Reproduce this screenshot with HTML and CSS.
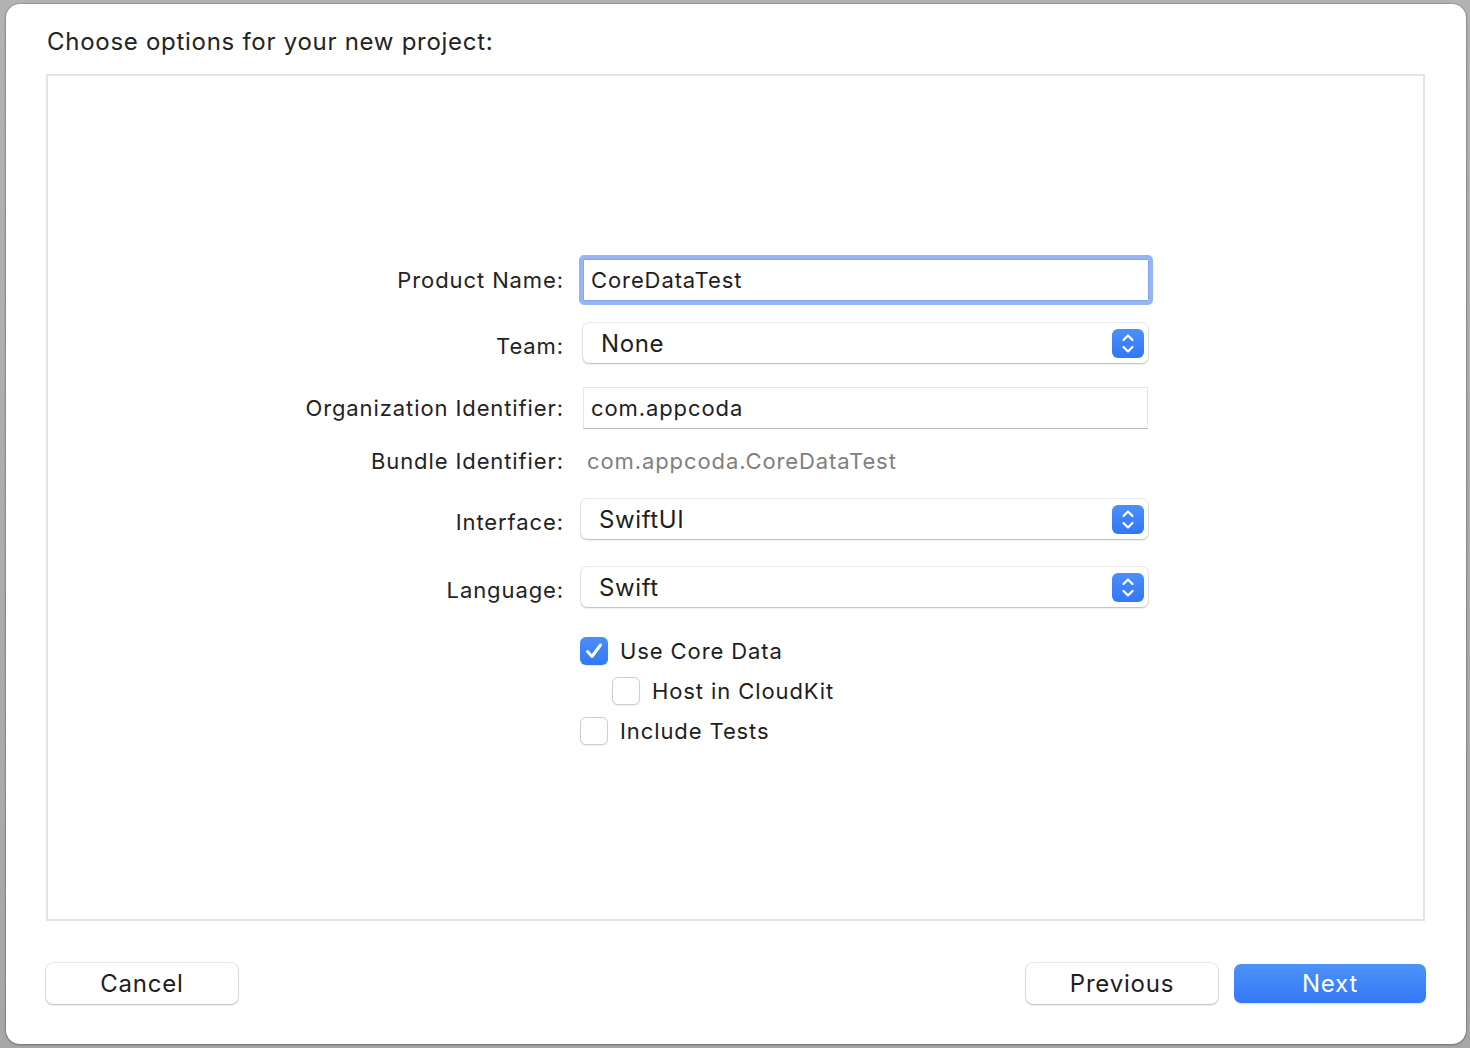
FILE: index.html
```html
<!DOCTYPE html>
<html lang="en">
<head>
<meta charset="utf-8">
<title>Choose options for your new project</title>
<link rel="stylesheet" href="styles.css">
</head>
<body>
<div class="window">
  <h1 class="title">Choose options for your new project:</h1>
  <div class="panel">
    <div class="form">
      <div class="row r1">
        <div class="label">Product Name:</div>
        <div class="field focused">CoreDataTest</div>
      </div>
      <div class="row r2">
        <div class="label low">Team:</div>
        <div class="popup team">
          <span class="popup-text">None</span>
          <span class="stepper"><svg width="32" height="29" viewBox="0 0 32 29"><path d="M11.5 11 L16 6.5 L20.5 11 M11.5 18 L16 22.5 L20.5 18" fill="none" stroke="#fff" stroke-width="2.2" stroke-linecap="round" stroke-linejoin="round"/></svg></span>
        </div>
      </div>
      <div class="row r3">
        <div class="label">Organization Identifier:</div>
        <div class="field plain">com.appcoda</div>
      </div>
      <div class="row r4">
        <div class="label">Bundle Identifier:</div>
        <div class="static">com.appcoda.CoreDataTest</div>
      </div>
      <div class="row r5">
        <div class="label low">Interface:</div>
        <div class="popup">
          <span class="popup-text">SwiftUI</span>
          <span class="stepper"><svg width="32" height="29" viewBox="0 0 32 29"><path d="M11.5 11 L16 6.5 L20.5 11 M11.5 18 L16 22.5 L20.5 18" fill="none" stroke="#fff" stroke-width="2.2" stroke-linecap="round" stroke-linejoin="round"/></svg></span>
        </div>
      </div>
      <div class="row r6">
        <div class="label low">Language:</div>
        <div class="popup">
          <span class="popup-text">Swift</span>
          <span class="stepper"><svg width="32" height="29" viewBox="0 0 32 29"><path d="M11.5 11 L16 6.5 L20.5 11 M11.5 18 L16 22.5 L20.5 18" fill="none" stroke="#fff" stroke-width="2.2" stroke-linecap="round" stroke-linejoin="round"/></svg></span>
        </div>
      </div>
      <div class="row check-row c1">
        <div class="label"></div>
        <div class="check">
          <span class="box checked"><svg width="28" height="28" viewBox="0 0 28 28"><path d="M7.5 14.5 L12 19.5 L20.5 8" fill="none" stroke="#fff" stroke-width="3" stroke-linecap="round" stroke-linejoin="round"/></svg></span>
          <span class="check-text">Use Core Data</span>
        </div>
      </div>
      <div class="row check-row c2">
        <div class="label"></div>
        <div class="check indent">
          <span class="box"></span>
          <span class="check-text">Host in CloudKit</span>
        </div>
      </div>
      <div class="row check-row c3">
        <div class="label"></div>
        <div class="check">
          <span class="box"></span>
          <span class="check-text">Include Tests</span>
        </div>
      </div>
    </div>
  </div>
  <div class="footer">
    <button class="btn">Cancel</button>
    <div class="spacer"></div>
    <button class="btn">Previous</button>
    <button class="btn primary">Next</button>
  </div>
</div>
</body>
</html>
```

FILE: styles.css
```css
html, body {
  margin: 0;
  padding: 0;
}
body {
  background: linear-gradient(#b3b3b3, #a7a7a7);
  width: 1470px;
  height: 1048px;
  overflow: hidden;
  font-family: Inter, "Noto Sans", "Liberation Sans", sans-serif;
  color: #232323;
  -webkit-font-smoothing: antialiased;
}
.window {
  box-sizing: border-box;
  margin: 4px 0 0 6px;
  width: 1460px;
  height: 1040px;
  background: #ffffff;
  border-radius: 14px;
  box-shadow: 0 0 0 1px rgba(0,0,0,0.12), 0 1px 3px rgba(0,0,0,0.25);
  display: flex;
  flex-direction: column;
  padding: 0 40px;
}
.title {
  margin: 24px 0 0 1px;
  font-size: 24px;
  line-height: 28px;
  font-weight: 400;
  color: #232323;
  letter-spacing: 0.72px;
}
.panel {
  box-sizing: border-box;
  margin-top: 18px;
  width: 1379px;
  height: 847px;
  border: 2px solid #e4e4e4;
  padding-top: 179px;
}
.form {
  display: flex;
  flex-direction: column;
}
.row {
  display: flex;
  align-items: center;
}
.label {
  box-sizing: border-box;
  width: 516px;
  flex: none;
  text-align: right;
  font-size: 22px;
  line-height: 26px;
  letter-spacing: 0.9px;
  color: #232323;
  margin-right: 15px;
}
.label.low {
  padding-top: 6px;
}
.r1 { height: 50px; }
.r2 { height: 40px; margin-top: 18px; }
.r3 { height: 42px; margin-top: 24px; }
.r4 { height: 30px; margin-top: 17px; }
.r5 { height: 40px; margin-top: 23px; }
.r6 { height: 40px; margin-top: 28px; }
.c1 { height: 28px; margin-top: 30px; }
.c2 { height: 28px; margin-top: 12px; }
.c3 { height: 28px; margin-top: 12px; }

.field {
  box-sizing: border-box;
  font-size: 22px;
  letter-spacing: 0.9px;
  color: #1e1e1e;
  display: flex;
  align-items: center;
  background: #fff;
}
.field.focused {
  width: 574px;
  height: 50px;
  border: 4px solid #97b5f5;
  border-radius: 5px;
  padding-left: 8px;
  box-shadow: inset 0 0 0 1px #86a7ef;
}
.field.plain {
  margin-left: 4px;
  width: 565px;
  height: 42px;
  border: 1px solid #e6e6e6;
  border-bottom-color: #bdbdbd;
  padding-left: 7px;
}
.static {
  margin-left: 8px;
  font-size: 22px;
  letter-spacing: 0.9px;
  color: #808080;
}
.popup {
  box-sizing: border-box;
  margin-left: 2px;
  width: 567px;
  height: 40px;
  border-radius: 6px;
  background: #fff;
  box-shadow: 0 0 0 1px rgba(0,0,0,0.07), 0 1px 2px rgba(0,0,0,0.22);
  display: flex;
  align-items: center;
  justify-content: space-between;
  padding-left: 18px;
  padding-right: 4px;
}
.popup.team {
  margin-left: 4px;
  width: 565px;
}
.popup-text {
  font-size: 24px;
  letter-spacing: 0.6px;
  color: #1e1e1e;
}
.stepper {
  width: 32px;
  height: 29px;
  border-radius: 6px;
  background: linear-gradient(#4b90f8, #3277f5);
  display: flex;
  margin-top: 1px;
}
.check {
  margin-left: 1px;
  display: flex;
  align-items: center;
}
.check.indent {
  margin-left: 33px;
}
.box {
  box-sizing: border-box;
  width: 28px;
  height: 28px;
  border-radius: 6px;
  border: 1px solid #cfcfcf;
  background: #fff;
  box-shadow: 0 0.5px 1px rgba(0,0,0,0.08);
  display: flex;
}
.box.checked {
  border: none;
  background: linear-gradient(#4a8ff8, #3278f5);
}
.check-text {
  margin-left: 12px;
  font-size: 22px;
  letter-spacing: 0.9px;
  color: #1e1e1e;
}
.footer {
  margin-top: 42px;
  display: flex;
  align-items: center;
}
.spacer {
  flex: 1;
}
.btn {
  box-sizing: border-box;
  width: 192px;
  height: 41px;
  border: none;
  border-radius: 7px;
  background: #fff;
  box-shadow: 0 0 0 1px rgba(0,0,0,0.08), 0 1px 2px rgba(0,0,0,0.22);
  font-family: inherit;
  font-size: 24px;
  letter-spacing: 0.8px;
  color: #1e1e1e;
  padding: 0;
  margin: 0;
}
.btn + .btn {
  margin-left: 16px;
}
.btn.primary {
  height: 39px;
  background: linear-gradient(#4d92f8, #3478f6);
  color: #fff;
  box-shadow: 0 1px 1px rgba(0,0,0,0.12);
}
```
